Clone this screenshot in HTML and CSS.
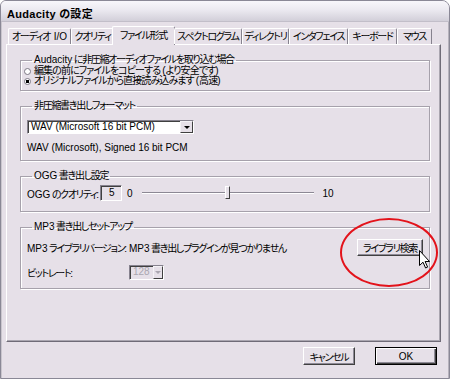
FILE: index.html
```html
<!DOCTYPE html>
<html lang="ja">
<head>
    <meta charset="UTF-8">
    <title>Audacity の設定</title>
    <link rel="stylesheet" href="styles.css">
</head>
<body>
    <div class="window">
        <div class="titlebar">Audacity の設定</div>
        <div class="client">
            <div class="tabs">
                <div class="tab">オーディオ <span class="en">I/O</span></div>
                <div class="tab">クオリティ</div>
                <div class="tab active">ファイル形式</div>
                <div class="tab">スペクトログラム</div>
                <div class="tab">ディレクトリ</div>
                <div class="tab">インタフェイス</div>
                <div class="tab">キーボード</div>
                <div class="tab">マウス</div>
            </div>

            <div class="panel">
                <!-- import -->
                <fieldset class="group group-import">
                    <legend><span class="en">Audacity</span> に非圧縮オーディオファイルを取り込む場合</legend>
                    <div class="radio"><span class="dot"></span><span>編集の前にファイルをコピーする <span class="en">(</span>より安全です<span class="en">)</span></span></div>
                    <div class="radio"><span class="dot on"></span><span>オリジナルファイルから直接読み込みます <span class="en">(</span>高速<span class="en">)</span></span></div>
                </fieldset>

                <!-- uncompressed export -->
                <fieldset class="group group-wav">
                    <legend>非圧縮書き出しフォーマット</legend>
                    <div class="select select-format">
                        <span class="select-text en">WAV (Microsoft 16 bit PCM)</span>
                        <span class="select-btn"><i class="arrow"></i></span>
                    </div>
                    <div class="note en">WAV (Microsoft), Signed 16 bit PCM</div>
                </fieldset>

                <!-- ogg -->
                <fieldset class="group group-ogg">
                    <legend><span class="en">OGG</span> 書き出し設定</legend>
                    <div class="ogg-row">
                        <span class="ogg-label"><span class="en">OGG</span> のクオリティ<span class="en">:</span></span>
                        <span class="numbox en">5</span>
                        <span class="tick-min en">0</span>
                        <div class="slider">
                            <div class="track"></div>
                            <div class="thumb" style="left: 50%"></div>
                        </div>
                        <span class="tick-max en">10</span>
                    </div>
                </fieldset>

                <!-- mp3 -->
                <fieldset class="group group-mp3">
                    <legend><span class="en">MP3</span> 書き出しセットアップ</legend>
                    <div class="mp3-grid">
                        <span><span class="en">MP3</span> ライブラリバージョン<span class="en">:</span></span>
                        <span><span class="en">MP3</span> 書き出しプラグインが見つかりません</span>
                        <button class="btn btn-find">ライブラリ検索</button>
                        <span class="bitrate-label">ビットレート<span class="en">:</span></span>
                        <div class="select select-bitrate disabled">
                            <span class="select-text en">128</span>
                            <span class="select-btn"><i class="arrow"></i></span>
                        </div>
                    </div>
                </fieldset>
            </div>

            <div class="footer">
                <button class="btn btn-cancel">キャンセル</button>
                <button class="btn btn-ok en">OK</button>
            </div>
        </div>

        <!-- annotation over the screenshot -->
        <div class="highlight"></div>
        <svg class="cursor" width="11" height="19" viewBox="0 0 11 19">
            <path d="M0.5 0.5 L0.5 15.5 L4 12.2 L6.6 18 L8.6 17.1 L6.1 11.5 L10.5 11.5 Z" fill="#fff" stroke="#000" stroke-width="1" stroke-linejoin="miter"/>
        </svg>
    </div>
</body>
</html>
```

FILE: styles.css
```css
/* General styles */
body {
    margin: 0;
    background-color: #ffffff;
    font-family: "Liberation Sans", "Noto Sans CJK JP", sans-serif;
    font-size: 10px;
    font-feature-settings: "palt";
    letter-spacing: -1.3px; /* Japanese UI font is much narrower */
    color: #000000;
}

/* Latin runs keep normal spacing */
.en {
    letter-spacing: 0;
}

/* Window frame */
.window {
    position: relative;
    width: 450px;
    height: 379px;
    box-sizing: border-box;
    background-color: #e6e0e8; /* lavender grey */
    border: 1px solid #8a8896;
    border-radius: 6px 8px 0 0;
    display: flex;
    flex-direction: column;
    overflow: hidden;
}

.titlebar {
    height: 21px;
    box-sizing: border-box;
    padding: 3px 0 0 6px;
    line-height: 20px;
    font-size: 11px;
    font-weight: bold;
    letter-spacing: 0.3px;
    background-image: linear-gradient(#f8f7fb, #ebe9f0 45%, #d2cfd9);
    border-bottom: 1px solid #c2bec9;
}

.client {
    flex: 1;
    padding: 4px 8px 0 5px;
    display: flex;
    flex-direction: column;
    box-shadow: inset 1px 0 #c9c5cd, inset -1px 0 #b6b2bc;
}

/* Tabs */
.tabs {
    display: flex;
    align-items: flex-end;
    height: 18px;
    margin-left: 2px;
    position: relative;
    z-index: 1;
}

.tab {
    height: 16px;
    box-sizing: border-box;
    line-height: 15px;
    text-align: center;
    white-space: nowrap;
    border-top: 1px solid #ffffff;
    border-left: 1px solid #ffffff;
    border-right: 1px solid #86828e;
    border-radius: 2px 2px 0 0;
}

.tab .en {
    margin-left: 2px;
}

/* tab widths follow the original dialog */
.tab:nth-child(1) { width: 63px; }
.tab:nth-child(2) { width: 43px; }
.tab:nth-child(3) { width: 63px; }
.tab:nth-child(4) { width: 68px; }
.tab:nth-child(5) { width: 47px; }
.tab:nth-child(6) { width: 59px; }
.tab:nth-child(7) { width: 49px; }
.tab:nth-child(8) { width: 35px; }

.tab.active {
    height: 19px;
    margin: 0 -1px -1px -2px;
    line-height: 17px;
    background-color: #e6e0e8;
}

/* Panel */
.panel {
    height: 298px;
    box-sizing: border-box;
    padding: 9px 10px 0 13px;
    border: 1px solid;
    border-color: #ffffff #6f6b77 #6f6b77 #ffffff;
    box-shadow: inset -1px -1px #aaa6b0;
}

.group {
    margin: 0 0 9px;
    padding: 0 6px 4px 6px;
    min-width: 0;
    border: 1px solid #a6a1ab;
    box-shadow: 1px 1px 0 #ffffff, inset 1px 1px 0 #ffffff;
}

.group legend {
    padding: 0 2px;
    margin-left: 5px;
    line-height: 12px;
}

/* Radio buttons */
.radio {
    display: flex;
    align-items: center;
    gap: 3px;
    height: 10px;
    line-height: 10px;
    margin-left: -3px;
    white-space: nowrap;
    letter-spacing: -0.9px;
}

.dot {
    width: 7px;
    height: 7px;
    box-sizing: border-box;
    border: 1px solid #7c7884;
    border-radius: 50%;
    background-color: #ffffff;
}

.dot.on {
    background-image: radial-gradient(circle, #000 0 1.6px, #fff 2px);
}

/* Dropdowns */
.select {
    display: flex;
    height: 14px;
    box-sizing: border-box;
    border: 1px solid;
    border-color: #86828e #ffffff #ffffff #86828e;
    background-color: #ffffff;
    box-shadow: inset 1px 1px #404040;
}

.select-text {
    flex: 1;
    padding: 0 3px;
    line-height: 12px;
    white-space: nowrap;
}

.select-btn {
    width: 13px;
    box-sizing: border-box;
    border: 1px solid;
    border-color: #f4f2f6 #404040 #404040 #f4f2f6;
    background-color: #e6e0e8;
    display: flex;
    align-items: center;
    justify-content: center;
}

.arrow {
    width: 0;
    height: 0;
    border-left: 3px solid transparent;
    border-right: 3px solid transparent;
    border-top: 3px solid #000000;
}

.select-format {
    width: 167px;
    margin-top: 8px;
}

.note {
    margin-top: 8px;
    line-height: 12px;
    padding-bottom: 2px;
}

.select.disabled {
    background-color: #e6e0e8;
    color: #aaa6b0;
    width: 35px;
    height: 15px;
}

.select.disabled .arrow {
    border-top-color: #aaa6b0;
}

/* OGG row */
.ogg-row {
    display: flex;
    align-items: center;
    height: 16px;
    margin-top: 3px;
    padding-bottom: 6px;
}

.ogg-label {
    width: 73px;
    white-space: nowrap;
}

.numbox {
    width: 22px;
    height: 16px;
    box-sizing: border-box;
    padding-left: 8px;
    line-height: 13px;
    border: 1px solid;
    border-color: #86828e #ffffff #ffffff #86828e;
    box-shadow: inset 1px 1px #404040;
}

.tick-min {
    margin-left: 5px;
}

.slider {
    position: relative;
    width: 172px;
    height: 14px;
    margin-left: 9px;
}

.track {
    position: absolute;
    top: 6px;
    left: 0;
    right: 0;
    height: 2px;
    border-top: 1px solid #8c8894;
    border-bottom: 1px solid #ffffff;
    box-sizing: border-box;
}

.thumb {
    position: absolute;
    top: 0;
    width: 5px;
    height: 13px;
    margin-left: -3px;
    box-sizing: border-box;
    border: 1px solid;
    border-color: #ffffff #404040 #404040 #ffffff;
    background-color: #e6e0e8;
}

.tick-max {
    margin-left: 9px;
}

/* MP3 */
.mp3-grid {
    display: grid;
    grid-template-columns: 102px 1fr auto;
    align-items: center;
    row-gap: 9px;
    margin-top: 6px;
    padding-bottom: 4px;
    white-space: nowrap;
}

.bitrate-label {
    grid-column: 1;
}

/* Buttons */
.btn {
    font: inherit;
    letter-spacing: inherit;
    color: #000000;
    background-color: #e6e0e8;
    height: 18px;
    padding: 0;
    box-sizing: border-box;
    border: 1px solid;
    border-color: #ffffff #404040 #404040 #ffffff;
    box-shadow: inset -1px -1px #8e8a96;
}

.btn-find {
    width: 66px;
    height: 17px;
}

.footer {
    display: flex;
    justify-content: flex-end;
    gap: 20px;
    margin-top: 5px;
    padding-right: 4px;
}

.btn-cancel {
    width: 52px;
}

.btn-ok {
    width: 62px;
    letter-spacing: 0;
    border: 1px solid #000000;
    box-shadow: inset 1px 1px #ffffff, inset -1px -1px #404040, inset -2px -2px #8e8a96;
}

/* Red circle + pointer drawn over the dialog */
.highlight {
    position: absolute;
    left: 339px;
    top: 217px;
    width: 98px;
    height: 69px;
    box-sizing: border-box;
    border: 2px solid #e3131b;
    border-radius: 50%;
}

.cursor {
    position: absolute;
    left: 418px;
    top: 249px;
}
```
